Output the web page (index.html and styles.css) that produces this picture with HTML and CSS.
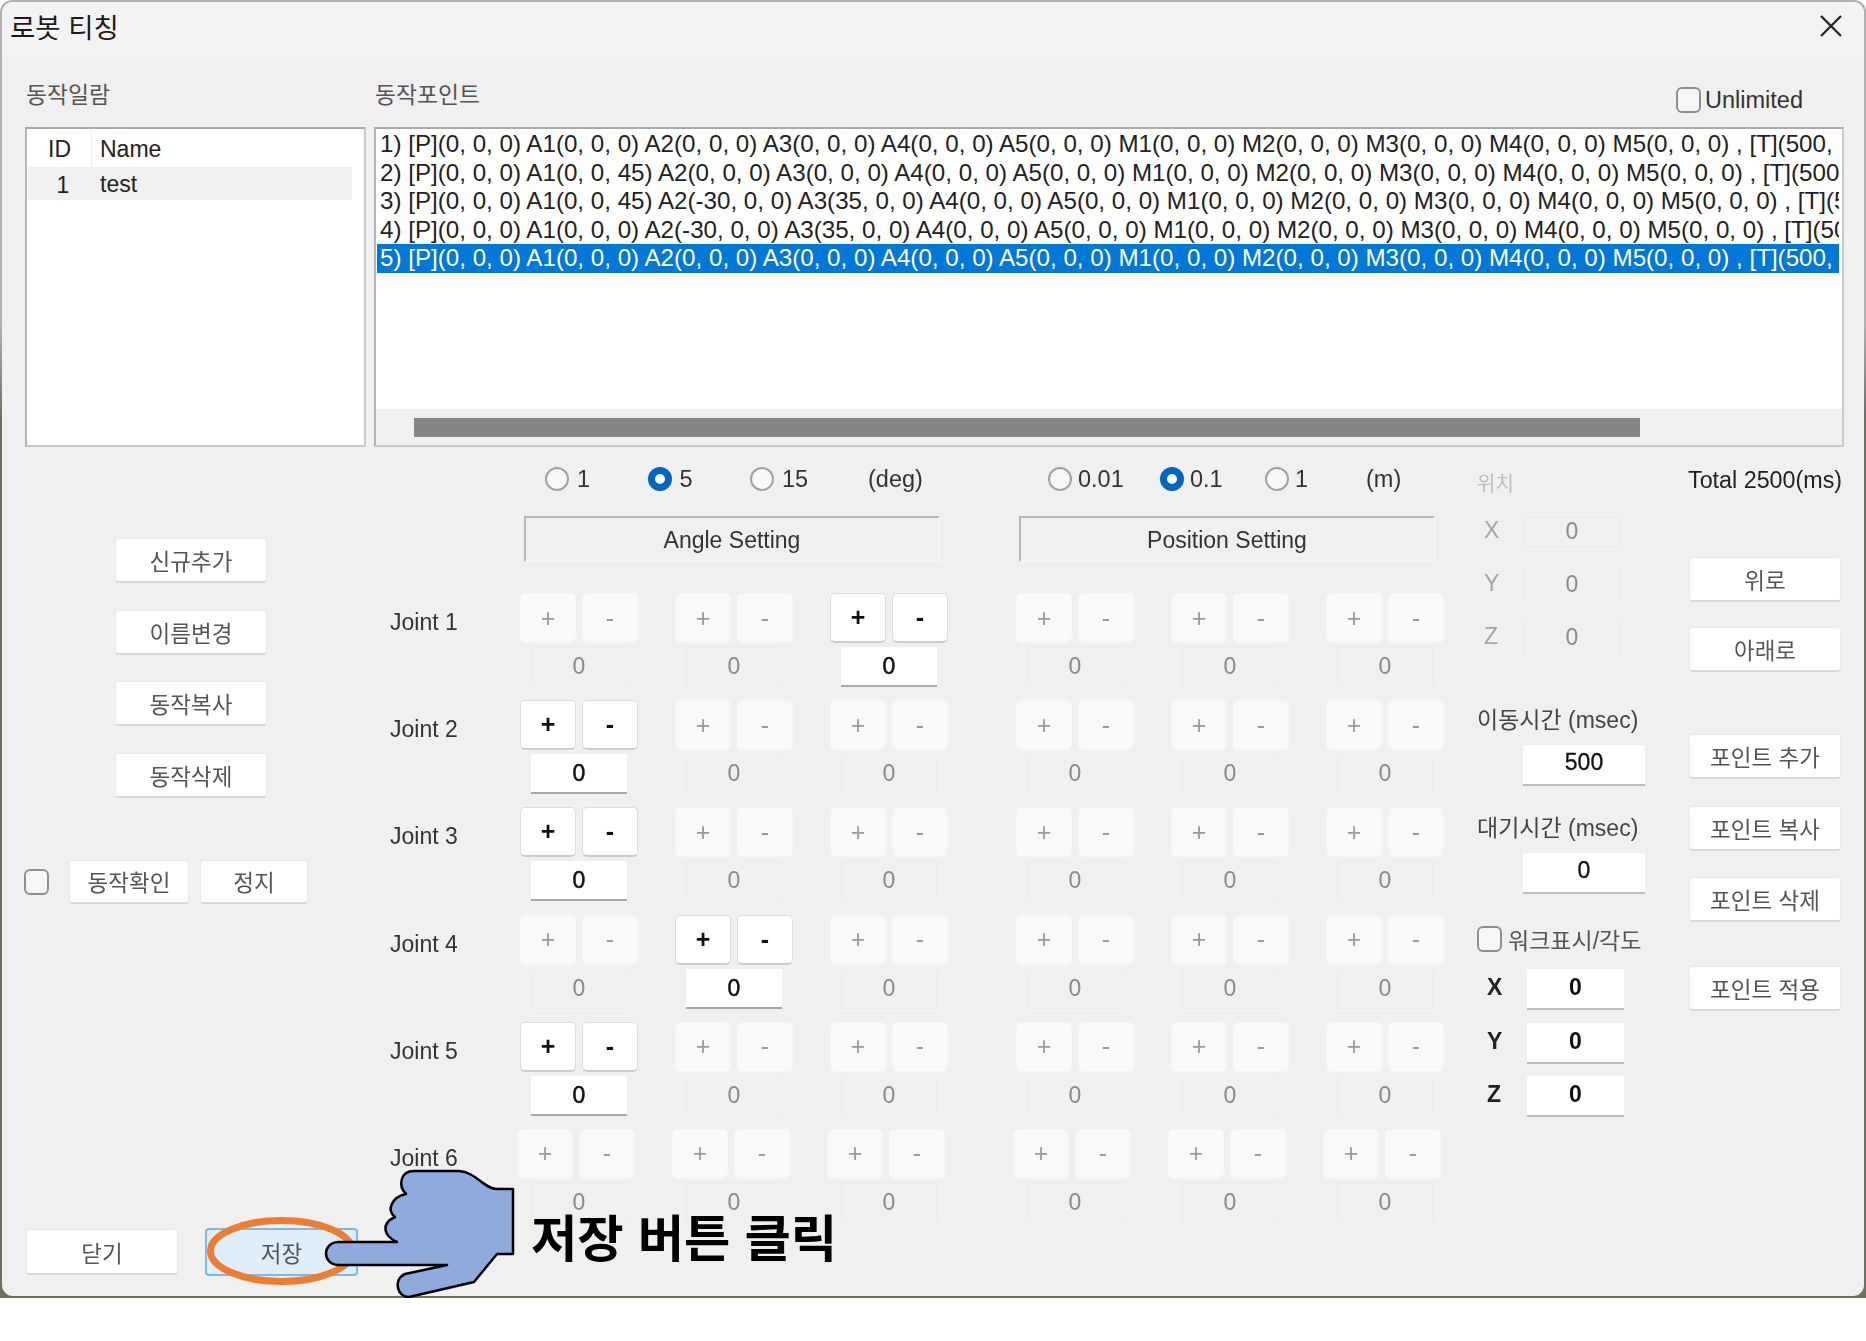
FILE: index.html
```html
<!DOCTYPE html>
<html lang="ko">
<head>
    <meta charset="UTF-8"/>
    <title>로봇 티칭</title>
    <link rel="stylesheet" href="styles.css">
</head>
<body>
<div class="frame">
    <div class="window">
        <header class="title-bar">
            <span class="title">로봇 티칭</span>
            <svg class="close" viewBox="0 0 22 22"><path d="M1 1L21 21M21 1L1 21"/></svg>
        </header>

        <section class="top">
            <div class="pane">
                <div class="pane-head"><span class="caption">동작일람</span></div>
                <div class="box">
                    <div class="row head"><span class="c-id">ID</span><span class="c-name">Name</span></div>
                    <div class="row sel"><span class="c-id">1</span><span class="c-name">test</span></div>
                </div>
            </div>
            <div class="pane">
                <div class="pane-head">
                    <span class="caption">동작포인트</span>
                    <label class="unlimited"><span class="check"></span>Unlimited</label>
                </div>
                <div class="box points">
                    <div class="lines">
                        <div class="line">1) [P](0, 0, 0) A1(0, 0, 0) A2(0, 0, 0) A3(0, 0, 0) A4(0, 0, 0) A5(0, 0, 0) M1(0, 0, 0) M2(0, 0, 0) M3(0, 0, 0) M4(0, 0, 0) M5(0, 0, 0) , [T](500,</div>
                        <div class="line">2) [P](0, 0, 0) A1(0, 0, 45) A2(0, 0, 0) A3(0, 0, 0) A4(0, 0, 0) A5(0, 0, 0) M1(0, 0, 0) M2(0, 0, 0) M3(0, 0, 0) M4(0, 0, 0) M5(0, 0, 0) , [T](500,</div>
                        <div class="line">3) [P](0, 0, 0) A1(0, 0, 45) A2(-30, 0, 0) A3(35, 0, 0) A4(0, 0, 0) A5(0, 0, 0) M1(0, 0, 0) M2(0, 0, 0) M3(0, 0, 0) M4(0, 0, 0) M5(0, 0, 0) , [T](500,</div>
                        <div class="line">4) [P](0, 0, 0) A1(0, 0, 0) A2(-30, 0, 0) A3(35, 0, 0) A4(0, 0, 0) A5(0, 0, 0) M1(0, 0, 0) M2(0, 0, 0) M3(0, 0, 0) M4(0, 0, 0) M5(0, 0, 0) , [T](500,</div>
                        <div class="line picked">5) [P](0, 0, 0) A1(0, 0, 0) A2(0, 0, 0) A3(0, 0, 0) A4(0, 0, 0) A5(0, 0, 0) M1(0, 0, 0) M2(0, 0, 0) M3(0, 0, 0) M4(0, 0, 0) M5(0, 0, 0) , [T](500,</div>
                    </div>
                    <div class="scrollbar"><div class="thumb"></div></div>
                </div>
            </div>
        </section>

        <section class="lower">
            <div class="left">
                <div class="actions">
                    <button class="btn">신규추가</button>
                    <button class="btn">이름변경</button>
                    <button class="btn">동작복사</button>
                    <button class="btn">동작삭제</button>
                </div>
                <div class="check-row">
                    <span class="check"></span>
                    <button class="btn btn-check">동작확인</button>
                    <button class="btn btn-stop">정지</button>
                </div>
                <div class="bottom-btns">
                    <button class="btn btn-bottom">닫기</button>
                    <button class="btn btn-bottom btn-save">저장</button>
                </div>
            </div>

            <div class="center">
                <div class="joint-row radios">
                    <div class="group deg">
                        <label class="opt"><span class="radio"></span>1</label>
                        <label class="opt"><span class="radio on"></span>5</label>
                        <label class="opt"><span class="radio"></span>15</label>
                        <span>(deg)</span>
                    </div>
                    <div class="group meter">
                        <label class="opt"><span class="radio"></span>0.01</label>
                        <label class="opt"><span class="radio on"></span>0.1</label>
                        <label class="opt"><span class="radio"></span>1</label>
                        <span>(m)</span>
                    </div>
                </div>
                <div class="joint-row settings">
                    <div class="setting">Angle Setting</div>
                    <div class="setting">Position Setting</div>
                </div>

                <div class="joints">
                    <div class="joint-row">
                        <div class="joint-name">Joint 1</div>
                        <div class="group">
                            <div class="cell"><div class="pair"><button>+</button><button>-</button></div><div class="val">0</div></div>
                            <div class="cell"><div class="pair"><button>+</button><button>-</button></div><div class="val">0</div></div>
                            <div class="cell on"><div class="pair"><button>+</button><button>-</button></div><div class="val">0</div></div>
                        </div>
                        <div class="group">
                            <div class="cell"><div class="pair"><button>+</button><button>-</button></div><div class="val">0</div></div>
                            <div class="cell"><div class="pair"><button>+</button><button>-</button></div><div class="val">0</div></div>
                            <div class="cell"><div class="pair"><button>+</button><button>-</button></div><div class="val">0</div></div>
                        </div>
                    </div>
                    <div class="joint-row">
                        <div class="joint-name">Joint 2</div>
                        <div class="group">
                            <div class="cell on"><div class="pair"><button>+</button><button>-</button></div><div class="val">0</div></div>
                            <div class="cell"><div class="pair"><button>+</button><button>-</button></div><div class="val">0</div></div>
                            <div class="cell"><div class="pair"><button>+</button><button>-</button></div><div class="val">0</div></div>
                        </div>
                        <div class="group">
                            <div class="cell"><div class="pair"><button>+</button><button>-</button></div><div class="val">0</div></div>
                            <div class="cell"><div class="pair"><button>+</button><button>-</button></div><div class="val">0</div></div>
                            <div class="cell"><div class="pair"><button>+</button><button>-</button></div><div class="val">0</div></div>
                        </div>
                    </div>
                    <div class="joint-row">
                        <div class="joint-name">Joint 3</div>
                        <div class="group">
                            <div class="cell on"><div class="pair"><button>+</button><button>-</button></div><div class="val">0</div></div>
                            <div class="cell"><div class="pair"><button>+</button><button>-</button></div><div class="val">0</div></div>
                            <div class="cell"><div class="pair"><button>+</button><button>-</button></div><div class="val">0</div></div>
                        </div>
                        <div class="group">
                            <div class="cell"><div class="pair"><button>+</button><button>-</button></div><div class="val">0</div></div>
                            <div class="cell"><div class="pair"><button>+</button><button>-</button></div><div class="val">0</div></div>
                            <div class="cell"><div class="pair"><button>+</button><button>-</button></div><div class="val">0</div></div>
                        </div>
                    </div>
                    <div class="joint-row">
                        <div class="joint-name">Joint 4</div>
                        <div class="group">
                            <div class="cell"><div class="pair"><button>+</button><button>-</button></div><div class="val">0</div></div>
                            <div class="cell on"><div class="pair"><button>+</button><button>-</button></div><div class="val">0</div></div>
                            <div class="cell"><div class="pair"><button>+</button><button>-</button></div><div class="val">0</div></div>
                        </div>
                        <div class="group">
                            <div class="cell"><div class="pair"><button>+</button><button>-</button></div><div class="val">0</div></div>
                            <div class="cell"><div class="pair"><button>+</button><button>-</button></div><div class="val">0</div></div>
                            <div class="cell"><div class="pair"><button>+</button><button>-</button></div><div class="val">0</div></div>
                        </div>
                    </div>
                    <div class="joint-row">
                        <div class="joint-name">Joint 5</div>
                        <div class="group">
                            <div class="cell on"><div class="pair"><button>+</button><button>-</button></div><div class="val">0</div></div>
                            <div class="cell"><div class="pair"><button>+</button><button>-</button></div><div class="val">0</div></div>
                            <div class="cell"><div class="pair"><button>+</button><button>-</button></div><div class="val">0</div></div>
                        </div>
                        <div class="group">
                            <div class="cell"><div class="pair"><button>+</button><button>-</button></div><div class="val">0</div></div>
                            <div class="cell"><div class="pair"><button>+</button><button>-</button></div><div class="val">0</div></div>
                            <div class="cell"><div class="pair"><button>+</button><button>-</button></div><div class="val">0</div></div>
                        </div>
                    </div>
                    <div class="joint-row last">
                        <div class="joint-name">Joint 6</div>
                        <div class="group">
                            <div class="cell"><div class="pair"><button>+</button><button>-</button></div><div class="val">0</div></div>
                            <div class="cell"><div class="pair"><button>+</button><button>-</button></div><div class="val">0</div></div>
                            <div class="cell"><div class="pair"><button>+</button><button>-</button></div><div class="val">0</div></div>
                        </div>
                        <div class="group">
                            <div class="cell"><div class="pair"><button>+</button><button>-</button></div><div class="val">0</div></div>
                            <div class="cell"><div class="pair"><button>+</button><button>-</button></div><div class="val">0</div></div>
                            <div class="cell"><div class="pair"><button>+</button><button>-</button></div><div class="val">0</div></div>
                        </div>
                    </div>
                </div>
            </div>

            <div class="pos-col">
                <div class="pos-title">위치</div>
                <div class="pos-rows">
                    <div class="pos-row"><span>X</span><div class="val">0</div></div>
                    <div class="pos-row"><span>Y</span><div class="val">0</div></div>
                    <div class="pos-row"><span>Z</span><div class="val">0</div></div>
                </div>
                <div class="time-label first">이동시간 (msec)</div>
                <div class="time-val">500</div>
                <div class="time-label">대기시간 (msec)</div>
                <div class="time-val">0</div>
                <label class="work"><span class="check"></span>워크표시/각도</label>
                <div class="work-rows">
                    <div class="work-row"><span>X</span><div class="work-val">0</div></div>
                    <div class="work-row"><span>Y</span><div class="work-val">0</div></div>
                    <div class="work-row"><span>Z</span><div class="work-val">0</div></div>
                </div>
            </div>

            <div class="point-col">
                <div class="total">Total 2500(ms)</div>
                <button class="btn btn-up">위로</button>
                <button class="btn btn-down">아래로</button>
                <button class="btn btn-add">포인트 추가</button>
                <button class="btn btn-copy">포인트 복사</button>
                <button class="btn btn-del">포인트 삭제</button>
                <button class="btn btn-apply">포인트 적용</button>
            </div>
        </section>
    </div>

    <!-- callout drawn over the dialog -->
    <svg class="callout" viewBox="200 1160 340 140">
        <ellipse class="ring" cx="281.500" cy="1251" rx="71" ry="30.500"/>
        <path class="hand" d="M397 1242C384 1236 380 1224 395 1217C386 1210 392 1197 406 1194C398 1186 400 1171 414 1171L459 1171C476 1172 484 1189 497 1189L513 1189L513 1254L497 1254L474 1282L409 1297C398 1298 392 1280 405 1274L447 1265L338 1265C322 1264 322 1243 338 1242Z"/>
    </svg>
    <div class="callout-text">저장 버튼 클릭</div>
</div>
</body>
</html>
```

FILE: styles.css
```css
html, body {
    margin: 0;
    background: #FFF;
}

body {
    font-family: "Liberation Sans", "Noto Sans CJK KR", sans-serif;
    font-size: 23px;
    color: #222;
}

button {
    font-family: inherit;
    outline: 0;
    padding: 0;
}

.frame {
    position: relative;
    box-sizing: border-box;
    width: 1866px;
    height: 1298px;
    padding: 2px;
    border-radius: 12px 12px 0 0;
    background: linear-gradient(#aeb2b6 0, #aeb2b6 25%, #70705f 32%);
}

.window {
    height: 100%;
    border-radius: 11px;
    background: #F0F0F0;
    overflow: hidden;
    filter: blur(0.4px);
}

.title-bar {
    height: 53px;
    background: #F3F3F3;
    display: flex;
    align-items: center;
    justify-content: space-between;
    padding: 0 22px 6px 8px;
    box-sizing: border-box;
}

.title {
    font-size: 27.500px;
    color: #1a1a1a;
}

.close {
    width: 22px;
    height: 22px;
    fill: none;
    stroke: #222;
    stroke-width: 2.200;
}

/* lists */
.top {
    display: grid;
    grid-template-columns: 341px 1470px;
    gap: 8px;
    padding-left: 23px;
}

.pane-head {
    height: 72px;
    display: flex;
    justify-content: space-between;
    align-items: flex-start;
}

.caption {
    margin: 26px 0 0 1px;
    line-height: 28px;
    font-size: 22.800px;
    color: #555;
}

.unlimited {
    display: flex;
    align-items: center;
    gap: 4px;
    margin: 32px 41px 0 0;
    height: 26px;
    font-size: 23.500px;
    color: #333;
}

.check {
    display: block;
    box-sizing: border-box;
    width: 25px;
    height: 26px;
    flex: none;
    border: 2px solid #8f8f8f;
    border-radius: 6px;
    background: #F6F6F6;
}

.box {
    box-sizing: border-box;
    height: 320px;
    background: #FFF;
    border: 2px solid #c9c9c9;
    border-top-color: #aaa;
    border-left-color: #b4b4b4;
}

.row {
    display: flex;
    width: 324px;
    margin-left: 1px;
    align-items: center;
}

.row.head {
    height: 37px;
    margin-top: 1px;
}

.row.sel {
    height: 33px;
    background: #F0F0F0;
}

.c-id {
    box-sizing: border-box;
    width: 64px;
    text-align: center;
    height: 100%;
    line-height: 36px;
    padding-left: 6px;
}

.head .c-id {
    border-right: 1px solid #ececec;
    line-height: 39px;
    padding-left: 0;
}

.c-name {
    padding-left: 8px;
    position: relative;
    top: 1px;
}

.points {
    display: flex;
    flex-direction: column;
}

.lines {
    flex: 1;
    overflow: hidden;
    padding: 1px 3px 0 1px;
    font-size: 24.170px;
    color: #222;
}

.line {
    height: 28.500px;
    line-height: 28.500px;
    padding-left: 3px;
    white-space: nowrap;
    overflow: hidden;
}

.line.picked {
    background: #0078D7;
    color: #FFF;
}

.scrollbar {
    height: 36px;
    background: #F0F0F0;
    display: flex;
    align-items: center;
}

.thumb {
    width: 1226px;
    height: 19px;
    margin-left: 38px;
    background: #858585;
}

/* lower part */
.lower {
    display: flex;
    height: 849px;
}

.btn {
    box-sizing: border-box;
    width: 152px;
    height: 45px;
    background: #FFF;
    color: #555;
    font-size: 22.500px;
    border: 1px solid #EAEAEA;
    border-bottom: 2px solid #D8D8D8;
    border-radius: 4px;
}

.left {
    box-sizing: border-box;
    width: 388px;
    flex: none;
    padding: 0 0 20px 22px;
    display: flex;
    flex-direction: column;
}

.actions {
    margin: 91px 0 0 91px;
    display: flex;
    flex-direction: column;
    gap: 26.500px;
}

.check-row {
    display: flex;
    align-items: center;
    margin-top: 62px;
}

.btn-check {
    width: 120px;
    height: 44px;
    margin-left: 20px;
}

.btn-stop {
    width: 108px;
    height: 44px;
    margin-left: 11px;
}

.bottom-btns {
    margin: auto 0 0 2px;
    display: flex;
    gap: 27px;
    align-items: center;
}

.btn-bottom {
    height: 46px;
}

.btn-save {
    width: 153px;
    height: 48px;
    background: #E0EEF9;
    border: 2px solid #7DB8E8;
}

.center {
    width: 1087px;
    flex: none;
}

.joint-row {
    display: flex;
    padding-left: 130px;
}

.joint-name {
    flex: none;
    width: 130px;
    margin-left: -130px;
    line-height: 59px;
    height: 59px;
    color: #333;
}

.group {
    display: flex;
    flex: none;
    width: 465px;
}

.group + .group {
    margin-left: 31px;
}

.radios {
    height: 28px;
    margin-top: 18px;
    line-height: 28px;
    font-size: 23.500px;
    color: #333;
}

.opt {
    display: flex;
    align-items: center;
    gap: 8px;
}

.radio {
    display: block;
    box-sizing: border-box;
    width: 24px;
    height: 24px;
    border: 2px solid #a2a2a2;
    border-radius: 50%;
    background: #F8F8F8;
}

.radio.on {
    border: 7px solid #0067C0;
    background: #FFF;
}

.deg {
    padding-left: 25px;
    box-sizing: border-box;
}

.deg .opt {
    width: 102.500px;
}

.deg .opt:nth-child(3) {
    width: 118px;
}

.meter {
    padding-left: 32px;
    box-sizing: border-box;
}

.meter .opt {
    width: 112px;
    gap: 6px;
}

.meter .opt:nth-child(2) {
    width: 105px;
}

.meter .opt:nth-child(3) {
    width: 101px;
}

.settings {
    margin-top: 23px;
    padding-left: 134px;
}

.setting {
    box-sizing: border-box;
    flex: none;
    width: 416px;
    height: 46px;
    line-height: 45px;
    text-align: center;
    color: #333;
    border: 2px solid #f6f6f6;
    border-top-color: #b5b5b5;
    border-left-color: #b5b5b5;
}

.setting + .setting {
    margin-left: 79px;
}

.joints {
    margin-top: 31px;
    display: flex;
    flex-direction: column;
    gap: 13.200px;
}

.cell {
    flex: none;
    width: 155px;
    height: 94px;
}

.pair {
    display: flex;
    gap: 6px;
    height: 50px;
    margin-bottom: 4px;
}

.last .pair {
    margin-left: -3px;
}

.pair button {
    box-sizing: border-box;
    width: 56px;
    height: 50px;
    background: #F9F9F9;
    border: 1px solid #F5F5F5;
    border-radius: 5px;
    color: #9a9a9a;
    font-size: 25px;
}

.cell.on .pair button {
    background: #FFF;
    border-color: #DDD;
    border-bottom: 2px solid #CCC;
    color: #111;
    font-weight: bold;
}

.val {
    box-sizing: border-box;
    width: 96px;
    height: 40px;
    margin-left: 11px;
    line-height: 36px;
    text-align: center;
    color: #8a8a8a;
    border: 1px solid #EBEBEB;
}

.cell.on .val {
    background: #FFF;
    border: 0;
    border-bottom: 2px solid #A8A8A8;
    color: #111;
    -webkit-text-stroke: 0.500px #111;
    line-height: 38px;
}

/* position column */
.pos-col {
    width: 212px;
    flex: none;
}

.pos-title {
    margin-top: 23px;
    line-height: 28px;
    font-size: 20px;
    color: #bdbdbd;
}

.pos-rows {
    margin-top: 14px;
    display: flex;
    flex-direction: column;
    gap: 13px;
}

.pos-row {
    display: flex;
    align-items: flex-start;
    height: 40px;
    line-height: 36px;
    color: #a5a5a5;
}

.pos-row span {
    box-sizing: border-box;
    flex: none;
    width: 47px;
    padding-left: 7px;
}

.pos-row .val {
    margin: 0;
    color: #8a8a8a;
}

.time-label {
    margin-top: 28px;
    line-height: 28px;
    font-size: 23px;
    color: #444;
}

.time-label.first {
    margin-top: 48px;
}

.time-val {
    box-sizing: border-box;
    width: 122px;
    height: 41px;
    margin: 11px 0 0 46px;
    background: #FFF;
    border-bottom: 2px solid #BBB;
    line-height: 35px;
    text-align: center;
    color: #111;
    -webkit-text-stroke: 0.300px #111;
}

.work {
    display: flex;
    align-items: center;
    gap: 6px;
    height: 28px;
    margin-top: 31px;
    font-size: 23px;
    color: #555;
}

.work-rows {
    margin-top: 16px;
    display: flex;
    flex-direction: column;
    gap: 12.500px;
}

.work-row {
    display: flex;
    height: 41px;
    line-height: 36px;
    font-weight: bold;
    color: #222;
}

.work-row span {
    box-sizing: border-box;
    flex: none;
    width: 50px;
    padding-left: 10px;
}

.work-val {
    box-sizing: border-box;
    width: 97px;
    background: #FFF;
    border-bottom: 2px solid #BBB;
    text-align: center;
    color: #111;
}

/* point buttons */
.point-col {
    display: flex;
    flex-direction: column;
    align-items: flex-start;
}

.total {
    margin-top: 19px;
    margin-left: -1px;
    line-height: 28px;
    font-size: 23.300px;
    white-space: nowrap;
    color: #222;
}

.btn-up { margin-top: 63px; }
.btn-down { margin-top: 25px; }
.btn-add { margin-top: 62px; }
.btn-copy { margin-top: 27px; }
.btn-del { margin-top: 26px; }
.btn-apply { margin-top: 44px; }

/* callout */
.callout {
    position: absolute;
    left: 200px;
    top: 1160px;
    width: 340px;
    height: 140px;
}

.ring {
    fill: none;
    stroke: #ED7D31;
    stroke-width: 7;
}

.hand {
    fill: #8FAADC;
    stroke: #000;
    stroke-width: 2.500;
    stroke-linejoin: round;
}

.callout-text {
    position: absolute;
    left: 531px;
    top: 1206px;
    line-height: 68px;
    font-size: 50.400px;
    font-weight: bold;
    color: #000;
    white-space: nowrap;
}
```
